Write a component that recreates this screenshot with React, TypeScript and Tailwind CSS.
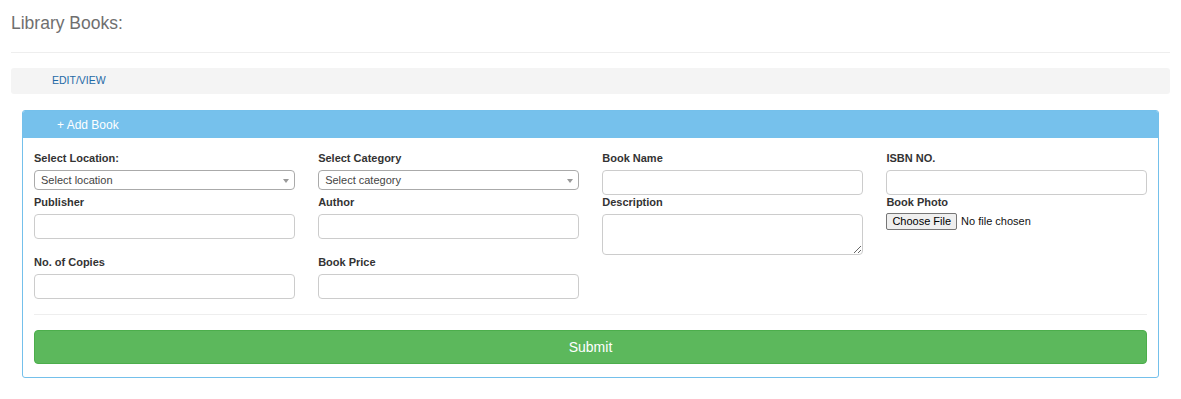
import React from "react";

const font = { fontFamily: '"Liberation Sans", Arial, sans-serif' };

function Label({ children }: { children: React.ReactNode }) {
  return (
    <div className="h-[12px] text-[11px] leading-[12px] font-bold text-[#333] mb-[6px] whitespace-nowrap">
      {children}
    </div>
  );
}

function TextInput() {
  return (
    <input
      type="text"
      className="block w-full h-[25px] border border-[#ccc] rounded-[4px] bg-white outline-none"
    />
  );
}

function SelectBox({ placeholder }: { placeholder: string }) {
  return (
    <div className="relative flex items-center w-full h-[20px] border border-[#aaa] rounded-[4px] bg-white pl-[6px] text-[11px] text-[#444]">
      <span>{placeholder}</span>
      <span className="absolute right-[5px] top-[8px] w-0 h-0 border-l-[3px] border-r-[3px] border-t-[4px] border-l-transparent border-r-transparent border-t-[#999]" />
    </div>
  );
}

export default function App() {
  return (
    <div className="bg-white min-h-[399px] px-[11px] pt-[12px]" style={font}>
      <h1 className="text-[17.5px] leading-[22px] text-[#6f6f6f] font-normal">Library Books:</h1>
      <div className="mt-[18px] border-t border-[#eeeeee]" />
      <div className="mt-[15px] h-[26px] bg-[#f4f4f4] rounded-[3px] flex items-center pl-[41px]">
        <span className="text-[10.5px] text-[#1f69a6]">EDIT/VIEW</span>
      </div>
      <div className="mt-[16px] mx-[11px] border border-[#74c0eb] rounded-[3px] overflow-hidden">
        <div className="h-[27px] bg-[#76c1ec] flex items-center pl-[34px] text-[12px] text-white">
          + Add Book
        </div>
        <div className="px-[11px] pt-[14px] pb-[13px]">
          <div className="grid grid-cols-4 gap-x-[23.5px]">
            <div>
              <Label>Select Location:</Label>
              <SelectBox placeholder="Select location" />
            </div>
            <div>
              <Label>Select Category</Label>
              <SelectBox placeholder="Select category" />
            </div>
            <div>
              <Label>Book Name</Label>
              <TextInput />
            </div>
            <div>
              <Label>ISBN NO.</Label>
              <TextInput />
            </div>
          </div>
          <div className="grid grid-cols-4 gap-x-[23.5px] mt-[1px]">
            <div>
              <Label>Publisher</Label>
              <TextInput />
            </div>
            <div>
              <Label>Author</Label>
              <TextInput />
            </div>
            <div>
              <Label>Description</Label>
              <textarea className="block w-full h-[41px] border border-[#ccc] rounded-[4px] bg-white outline-none resize-y" />
            </div>
            <div>
              <div className="h-[12px] text-[11px] leading-[12px] font-bold text-[#333] mb-[5px]">Book Photo</div>
              <div className="flex items-center text-[11px] text-[#111]">
                <span className="h-[17px] px-[5px] flex items-center border border-[#767676] rounded-[2px] bg-[#efefef] text-[11px] text-black">
                  Choose File
                </span>
                <span className="ml-[4px]">No file chosen</span>
              </div>
            </div>
          </div>
          <div className="grid grid-cols-4 gap-x-[23.5px] mt-[1px]">
            <div>
              <Label>No. of Copies</Label>
              <TextInput />
            </div>
            <div>
              <Label>Book Price</Label>
              <TextInput />
            </div>
          </div>
          <div className="mt-[15px] border-t border-[#eeeeee]" />
          <button className="mt-[15px] w-full h-[34px] bg-[#5cb85c] border border-[#4cae4c] rounded-[4px] text-white text-[14px] flex items-center justify-center">
            Submit
          </button>
        </div>
      </div>
    </div>
  );
}
